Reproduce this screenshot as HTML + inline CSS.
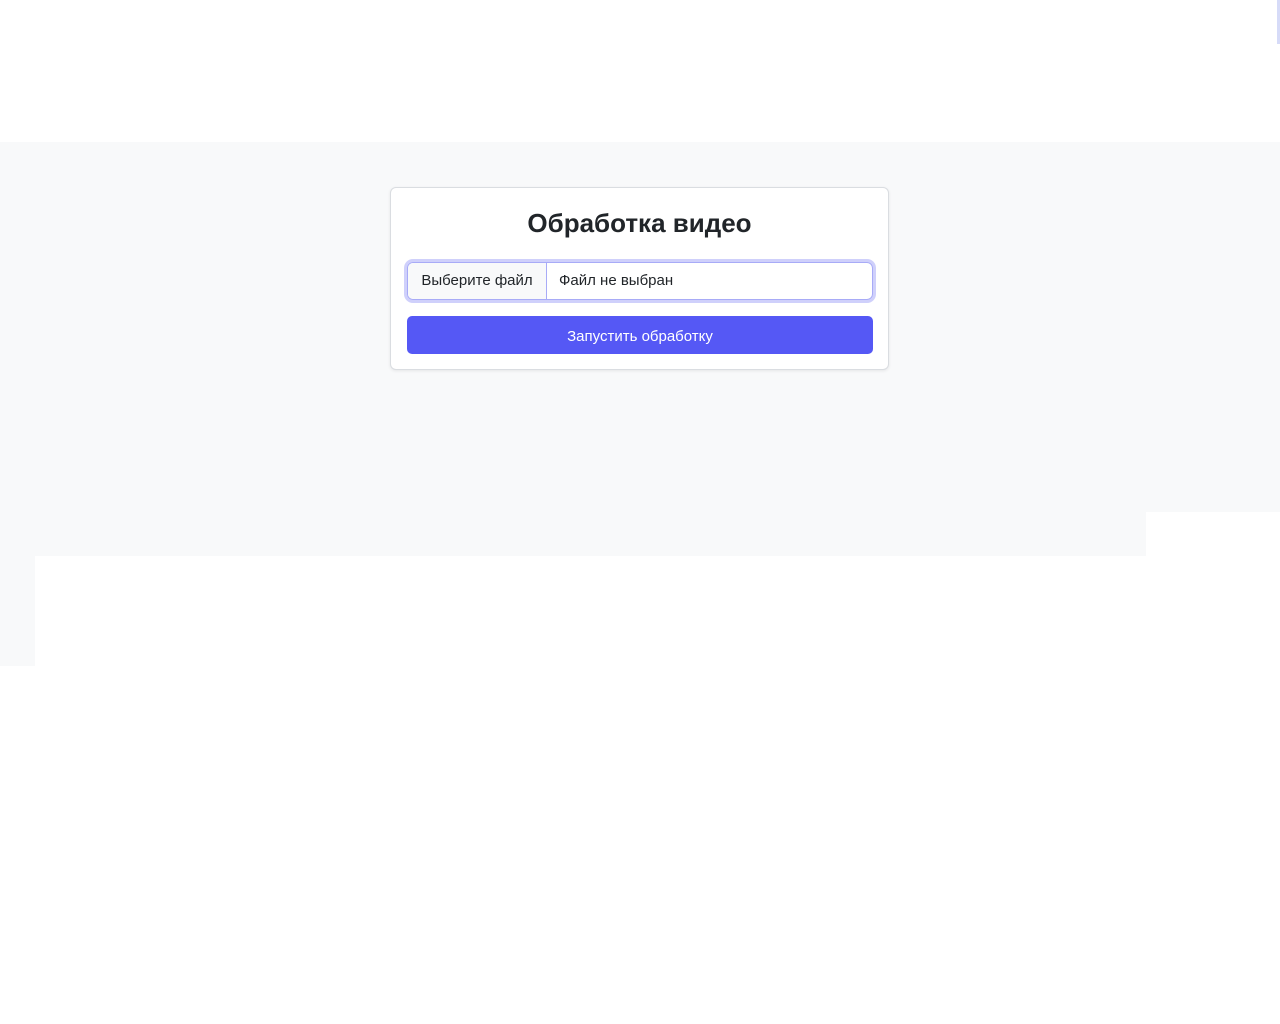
<!DOCTYPE html>
<html><head><meta charset="utf-8"><style>
body{margin:0;width:1280px;height:1024px;background:#fff;position:relative;font-family:"Liberation Sans",sans-serif;overflow:hidden}
.g{position:absolute;background:#f8f9fa}
.card{position:absolute;left:390px;top:187px;width:497px;height:181px;background:#fff;border:1px solid #dadde1;border-radius:6px;box-shadow:0 1px 3px rgba(0,0,0,.08)}
h1{margin:0;position:absolute;top:20px;left:0;right:0;text-align:center;font-size:26px;font-weight:bold;color:#212529;line-height:30px}
.inp{position:absolute;left:16px;top:74px;width:464px;height:36px;border:1px solid #a8abf7;border-radius:6px;box-shadow:0 0 0 3px #cfd0fb;display:flex;font-size:15px;color:#212529;overflow:hidden;line-height:40px}
.inp .b{width:138px;background:#f8f9fa;border-right:1px solid #a8abf7;display:flex;align-items:center;justify-content:center}
.inp .t{padding-left:12px;display:flex;align-items:center}
.btn{position:absolute;left:16px;top:128px;width:466px;height:38px;background:#5558f5;border-radius:5px;color:#fff;font-size:15px;display:flex;align-items:center;justify-content:center;padding-top:2px;box-sizing:border-box}
</style></head><body>
<div class="g" style="left:0;top:142px;width:1280px;height:370px"></div>
<div class="g" style="left:0;top:512px;width:1146px;height:44px"></div>
<div class="g" style="left:0;top:556px;width:35px;height:110px"></div>
<div style="position:absolute;left:1277px;top:0;width:3px;height:44px;background:#d6dbf8"></div>
<div class="card">
<h1>Обработка видео</h1>
<div class="inp"><div class="b">Выберите файл</div><div class="t">Файл не выбран</div></div>
<div class="btn">Запустить обработку</div>
</div>
</body></html>
